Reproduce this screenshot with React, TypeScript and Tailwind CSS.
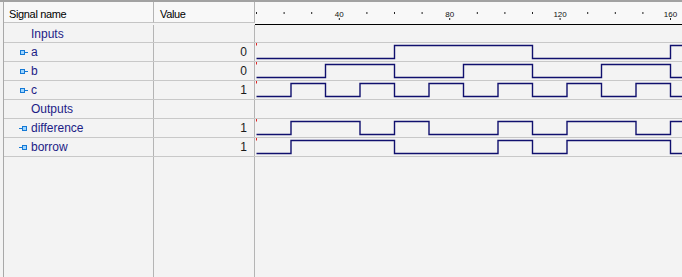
const STEP = 34.5;
const X0 = 1.5;
const WAVE_W = 427;

type Bits = { a: number; b: number; c: number };

const bitsAt = (k: number): Bits => {
  const s = k % 8;
  return { a: (s >> 2) & 1, b: (s >> 1) & 1, c: s & 1 };
};

type Row =
  | { kind: "group"; label: string }
  | { kind: "in" | "out"; label: string; value: string; fn: (v: Bits) => number };

const rows: Row[] = [
  { kind: "group", label: "Inputs" },
  { kind: "in", label: "a", value: "0", fn: (v) => v.a },
  { kind: "in", label: "b", value: "0", fn: (v) => v.b },
  { kind: "in", label: "c", value: "1", fn: (v) => v.c },
  { kind: "group", label: "Outputs" },
  { kind: "out", label: "difference", value: "1", fn: (v) => v.a ^ v.b ^ v.c },
  {
    kind: "out",
    label: "borrow",
    value: "1",
    fn: (v) => ((!v.a && v.b) || (!v.a && v.c) || (v.b && v.c) ? 1 : 0),
  },
];

function wavePath(fn: (v: Bits) => number) {
  const y = (v: number) => (v ? 2.5 : 15.5);
  const val = (k: number) => fn(bitsAt(k));
  let d = `M${X0} ${y(val(0))}`;
  for (let k = 0; k <= 12; k++) {
    const xe = k < 12 ? X0 + (k + 1) * STEP : WAVE_W;
    d += ` H${xe}`;
    if (k < 12 && val(k + 1) !== val(k)) d += ` V${y(val(k + 1))}`;
  }
  return d;
}

function PortIcon({ kind }: { kind: "in" | "out" }) {
  return (
    <svg width="9" height="5" viewBox="0 0 9 5" className="shrink-0">
      {kind === "in" ? (
        <>
          <rect x="1.5" y="0.5" width="4" height="4" fill="#9fd6ff" stroke="#1479d6" />
          <line x1="6" y1="2.5" x2="9" y2="2.5" stroke="#1479d6" />
        </>
      ) : (
        <>
          <line x1="0" y1="2.5" x2="4" y2="2.5" stroke="#1479d6" />
          <rect x="3.5" y="0.5" width="4" height="4" fill="#9fd6ff" stroke="#1479d6" />
        </>
      )}
    </svg>
  );
}

function Ruler() {
  const ticks = Array.from({ length: 16 }, (_, i) => i);
  return (
    <svg width={WAVE_W} height="22" className="block">
      {ticks.map((i) => {
        const x = X0 + i * 27.6;
        const major = (i + 1) % 4 === 0;
        return major ? (
          <g key={i}>
            <text
              x={x}
              y="14.5"
              textAnchor="middle"
              fontSize="8"
              fontFamily="Liberation Sans, Arial, sans-serif"
              fill="#111"
            >
              {(i + 1) * 10}
            </text>
            <rect x={x - 0.5} y="16" width="1" height="2" fill="#222" />
          </g>
        ) : (
          <rect key={i} x={x - 0.5} y="10" width="1" height="2" fill="#222" />
        );
      })}
    </svg>
  );
}

export default function App() {
  return (
    <div className="w-[682px] h-[277px] overflow-hidden bg-[#f3f3f3] border-t-2 border-[#a2a2a2] font-['Liberation_Sans',Arial,sans-serif]">
      <div className="ml-[3px] h-full border-l border-[#a8a8a8] flex flex-col">
        {/* header */}
        <div className="flex items-start">
          <div className="w-[150px] h-[21px] border-r border-b border-r-[#b4b4b4] border-b-[#c4c4c4] bg-[#f8f8f8] pl-[5px] pt-[7px] text-[11px] leading-[11px] tracking-[-0.35px] text-black">
            Signal name
          </div>
          <div className="w-[101px] h-[21px] border-r border-b border-r-[#b4b4b4] border-b-[#c4c4c4] bg-[#f8f8f8] pl-[6px] pt-[7px] text-[11px] leading-[11px] tracking-[-0.35px] text-black">
            Value
          </div>
          <div className="flex-1 h-[23px] border-b border-black bg-[#f8f8f8]">
            <Ruler />
          </div>
        </div>

        {rows.map((row, i) => (
          <div
            key={row.label}
            className={`flex border-b border-[#c8c8c8] ${i === 0 ? "h-[18px]" : "h-[19px]"}`}
          >
            <div className="w-[150px] border-r border-[#b4b4b4] flex items-center text-[12px] text-[#1c1c86]">
              {row.kind === "group" ? (
                <span className="pl-[27px]">{row.label}</span>
              ) : (
                <div className="flex items-center pl-[15px] gap-[3px]">
                  <PortIcon kind={row.kind} />
                  <span>{row.label}</span>
                </div>
              )}
            </div>
            <div className="w-[101px] border-r border-[#b4b4b4] flex items-center justify-end pr-[7px] text-[12px] text-[#1a1a1a]">
              {row.kind !== "group" && row.value}
            </div>
            <div className="flex-1">
              {row.kind !== "group" && (
                <svg width={WAVE_W} height="18" className="block">
                  <rect x="1" y="0" width="1" height="2.5" fill="#e02424" />
                  <path d={wavePath(row.fn)} fill="none" stroke="#10106e" strokeWidth="1.4" />
                </svg>
              )}
            </div>
          </div>
        ))}

        {/* empty area below */}
        <div className="flex flex-1">
          <div className="w-[150px] border-r border-[#b4b4b4]" />
          <div className="w-[101px] border-r border-[#b4b4b4]" />
          <div className="flex-1" />
        </div>
      </div>
    </div>
  );
}
